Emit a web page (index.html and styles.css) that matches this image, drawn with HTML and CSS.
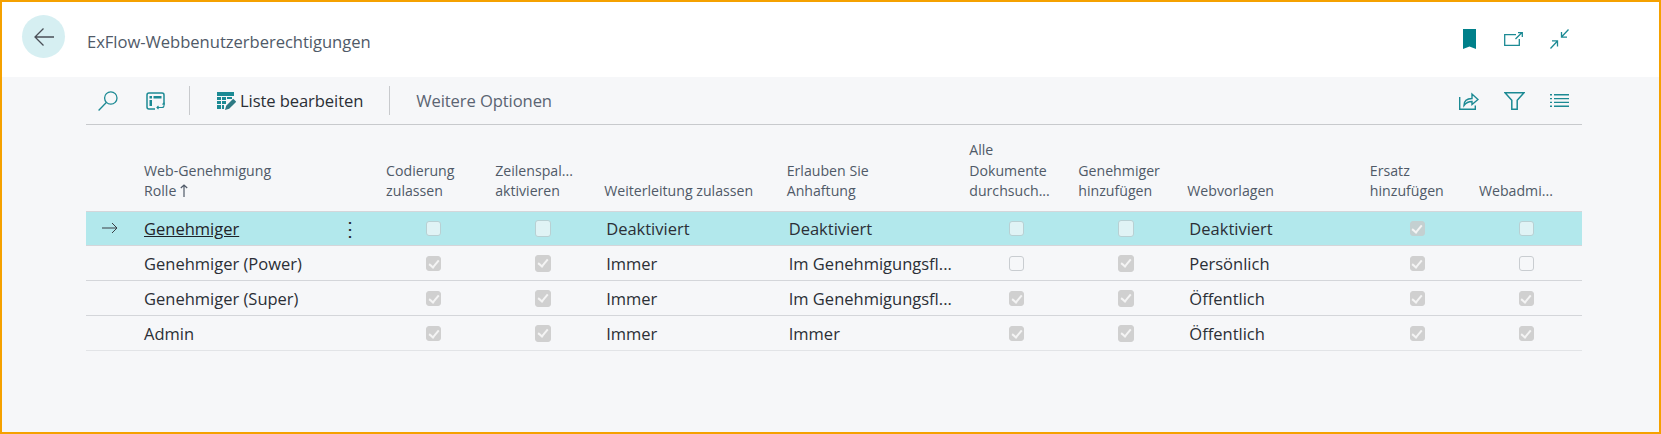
FILE: index.html
```html
<!DOCTYPE html>
<html lang="de">
<head>
<meta charset="utf-8">
<title>ExFlow-Webbenutzerberechtigungen</title>
<link rel="stylesheet" href="styles.css">
</head>
<body>
<div class="frame">
  <header class="page-head">
    <button class="back" aria-label="Zurück">
      <svg width="22" height="20" viewBox="0 0 22 20" fill="none" stroke="#4a4f57" stroke-width="1.3"><path d="M21 10H2M10.5 1.5 2 10l8.500 8.500"/></svg>
    </button>
    <h1 class="title">ExFlow-Webbenutzerberechtigungen</h1>
    <div class="head-icons">
      <svg width="13" height="20" viewBox="0 0 13 20"><path d="M0 0h13v20l-6.500-2.500L0 20z" fill="#00808a"/></svg>
      <svg width="19" height="14" viewBox="0 0 19 14" fill="none" stroke="#1c8a94" stroke-width="1.300"><path d="M12 2.600H.7v10.700h14.600V7M11.500 7 17.500 1M14 .7h4.300V5"/></svg>
      <svg width="19" height="20" viewBox="0 0 19 20" fill="none" stroke="#1c8a94" stroke-width="1.300"><path d="M18.500.500 11.500 8M11.500 3v5.200H17M.5 19.500 7.500 12M2 11.800h5.500V17.500"/></svg>
    </div>
  </header>
  <main class="content">
    <nav class="toolbar">
      <svg class="ic-search" width="20" height="20" viewBox="0 0 20 20" fill="none" stroke="#1c8a94" stroke-width="1.300"><circle cx="12.800" cy="7" r="6.200"/><path d="M8.300 11.500.6 19.500"/></svg>
      <svg class="ic-layout" width="19" height="18" viewBox="0 0 19 18" fill="none" stroke="#1c8a94"><path d="M9 17H3a2 2 0 0 1-2-2V3a2 2 0 0 1 2-2h13a2 2 0 0 1 2 2v8" stroke-width="1.500"/><path d="M7.500 4h8v2.500h-8zM3.500 4h2.500v2.500H3.500zM3.500 8h2.500v6H3.500z" fill="#1c8a94" stroke="none"/><path d="M11 15.500h5a2 2 0 0 0 2-2v-2M12.500 14l-1.500 1.500 1.500 1.500M16.500 12.500 18 11l1 1.500" stroke-width="1.100"/></svg>
      <span class="sep sep-a"></span>
      <button class="tool edit">
        <svg width="19" height="18" viewBox="0 0 19 18"><path d="M0 0h17v4H0zM0 5h4v3H0zM5 5h4v3H5zM10 5h5v2h-5zM0 9h4v3H0zM5 9h4v3H5zM0 13h4v4H0zM5 13h2v4H5z" fill="#1c8a94"/><path d="M8 18l1.200-4.300 7-7 3 3-7 7z" fill="#2d7a84"/></svg>
        Liste bearbeiten
      </button>
      <span class="sep sep-b"></span>
      <button class="tool more">Weitere Optionen</button>
      <div class="tool-right">
        <svg width="20" height="18" viewBox="0 0 20 18" fill="none" stroke="#1c8a94" stroke-width="1.400"><path d="M.7 5v12.300h15.600V13.500"/><path d="M5 13.500c0-4.800 3-7 8-7V2l6 5.500-6 5V9.500c-3.500 0-6 1.200-8 4z"/></svg>
        <svg width="21" height="18" viewBox="0 0 21 18" fill="none" stroke="#1c8a94" stroke-width="1.500"><path d="M1 .8h19l-6.800 7.500v9H7.800v-9z"/></svg>
        <svg width="19" height="13" viewBox="0 0 19 13" fill="none" stroke="#1c8a94" stroke-width="1.400"><path d="M0 .8h2M4 .8h15M0 4.600h2M4 4.600h15M0 8.400h2M4 8.400h15M0 12.200h2M4 12.200h15"/></svg>
      </div>
    </nav>
    <table class="grid">
      <colgroup>
        <col class="c-mark"><col class="c-name"><col class="c-bool"><col class="c-bool"><col class="c-text"><col class="c-text"><col class="c-bool"><col class="c-bool"><col class="c-text"><col class="c-bool"><col class="c-bool">
      </colgroup>
      <thead>
        <tr>
          <th></th>
          <th>Web-Genehmigung<br>Rolle <svg class="sort" width="8" height="13" viewBox="0 0 8 13" fill="none" stroke="#505a68" stroke-width="1.200"><path d="M4 13V1M.8 4 4 1l3.200 3"/></svg></th>
          <th>Codierung<br>zulassen</th>
          <th>Zeilenspal...<br>aktivieren</th>
          <th>Weiterleitung zulassen</th>
          <th>Erlauben Sie<br>Anhaftung</th>
          <th>Alle<br>Dokumente<br>durchsuch...</th>
          <th>Genehmiger<br>hinzufügen</th>
          <th>Webvorlagen</th>
          <th>Ersatz<br>hinzufügen</th>
          <th>Webadmi...</th>
        </tr>
      </thead>
      <tbody>
        <tr class="selected">
          <td class="mark"><svg width="16" height="12" viewBox="0 0 16 12" fill="none" stroke="#3a3f46" stroke-width="1"><path d="M0 6h15M10 1l5 5-5 5"/></svg></td>
          <td class="name"><a href="#">Genehmiger</a><span class="dots">⋮</span></td>
          <td><span class="cb"></span></td><td><span class="cb wide"></span></td>
          <td>Deaktiviert</td><td>Deaktiviert</td>
          <td><span class="cb"></span></td><td><span class="cb wide"></span></td>
          <td>Deaktiviert</td>
          <td><span class="cb on"></span></td><td><span class="cb"></span></td>
        </tr>
        <tr>
          <td></td><td class="name">Genehmiger (Power)</td>
          <td><span class="cb on"></span></td><td><span class="cb wide on"></span></td>
          <td>Immer</td><td>Im Genehmigungsfl...</td>
          <td><span class="cb"></span></td><td><span class="cb wide on"></span></td>
          <td>Persönlich</td>
          <td><span class="cb on"></span></td><td><span class="cb"></span></td>
        </tr>
        <tr>
          <td></td><td class="name">Genehmiger (Super)</td>
          <td><span class="cb on"></span></td><td><span class="cb wide on"></span></td>
          <td>Immer</td><td>Im Genehmigungsfl...</td>
          <td><span class="cb on"></span></td><td><span class="cb wide on"></span></td>
          <td>Öffentlich</td>
          <td><span class="cb on"></span></td><td><span class="cb on"></span></td>
        </tr>
        <tr>
          <td></td><td class="name">Admin</td>
          <td><span class="cb on"></span></td><td><span class="cb wide on"></span></td>
          <td>Immer</td><td>Immer</td>
          <td><span class="cb on"></span></td><td><span class="cb wide on"></span></td>
          <td>Öffentlich</td>
          <td><span class="cb on"></span></td><td><span class="cb on"></span></td>
        </tr>
      </tbody>
    </table>
  </main>
</div>
</body>
</html>
```
FILE: styles.css
```css
* { box-sizing: border-box; }
html, body { margin: 0; height: 100%; }
body { font-family: "Open Sans", "Liberation Sans", sans-serif; color: #2b2f36; background: #f6f7f9; overflow: hidden; }
button { font: inherit; background: none; border: 0; padding: 0; color: inherit; }

.frame { height: 434px; border: 2px solid #f5a100; display: flex; flex-direction: column; }

.page-head { height: 75px; background: #fff; display: flex; align-items: center; padding: 0 90px 0 20px; }
.back { width: 43px; height: 43px; border-radius: 50%; background: #d6eff2; display: flex; align-items: center; justify-content: center; margin-top: -6px; }
.title { margin: 3px 0 0 22px; font-size: 16.600px; font-weight: 400; color: #505a68; letter-spacing: -0.04px; }
.head-icons { margin-left: auto; display: flex; align-items: center; gap: 27px; margin-top: -1px; }
.head-icons svg:nth-child(2) { margin-left: 1px; }

.content { flex: 1; padding: 0 77px 0 84px; }

.toolbar { height: 48px; border-bottom: 1px solid #c8cacd; display: flex; align-items: center; padding-left: 12px; }
.ic-layout { margin-left: 28px; }
.sep { width: 1px; height: 29px; background: #c8cacd; }
.sep-a { margin-left: 24px; }
.tool { display: flex; align-items: center; font-size: 16.600px; letter-spacing: -0.1px; }
.edit { margin-left: 27px; gap: 4px; color: #2b2f36; }
.sep-b { margin-left: 26px; }
.more { margin-left: 26px; color: #5b6472; }
.tool-right { margin-left: auto; display: flex; align-items: center; gap: 25px; padding-right: 13px; }

.grid { width: 1496px; table-layout: fixed; border-collapse: collapse; }
.c-mark { width: 52px; }
.c-name { width: 242px; }
.c-bool { width: 109px; }
.c-text { width: 182.500px; }
.grid th { height: 86px; padding: 0 0 9px 6px; vertical-align: bottom; text-align: left; font-weight: 400; font-size: 14.150px; line-height: 20.500px; color: #505a68; white-space: nowrap; }
.sort { vertical-align: -1px; }
.grid td { height: 34.900px; padding: 0 0 0 8px; border-top: 1px solid #d4d6da; font-size: 16.500px; white-space: nowrap; color: #2b2f36; }
.grid .name { padding-left: 6px; }
.grid tbody tr:last-child td { border-bottom: 1px solid #e2e4e7; }
.selected td { background: #b2e8ec; }
.grid .mark { padding-left: 16px; }
.mark svg { display: block; }
.name { position: relative; }
.name a { color: #1f2329; }
.dots { position: absolute; left: 202px; top: 3px; font-size: 20px; line-height: 28px; color: #2b2f36; }

.cb { display: block; position: relative; width: 15px; height: 15px; margin-left: 38px; border: 1.500px solid #c9cdd1; border-radius: 3px; background: #f6f7f9; }
.selected .cb { background: #e0f3f5; border-color: #b8d0d3; }
.cb.wide { width: 16px; height: 17px; margin-left: 38px; }
.cb.on { background: #d0d0d0; border-color: #d0d0d0; }
.selected .cb.on { background: #c4d0d1; border-color: #c4d0d1; }
.cb.on::after { content: ""; position: absolute; left: 3.500px; top: 1px; width: 4px; height: 8px; border: solid #f4f4f4; border-width: 0 2px 2px 0; transform: rotate(40deg); }
```
